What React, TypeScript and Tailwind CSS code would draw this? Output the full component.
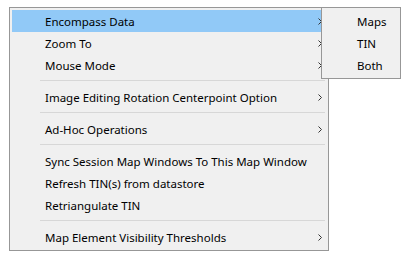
import { ReactNode } from 'react';

type Entry = { label: string; sub?: boolean; active?: boolean } | 'sep';

const entries: Entry[] = [
  { label: 'Encompass Data', sub: true, active: true },
  { label: 'Zoom To', sub: true },
  { label: 'Mouse Mode', sub: true },
  'sep',
  { label: 'Image Editing Rotation Centerpoint Option', sub: true },
  'sep',
  { label: 'Ad-Hoc Operations', sub: true },
  'sep',
  { label: 'Sync Session Map Windows To This Map Window' },
  { label: 'Refresh TIN(s) from datastore' },
  { label: 'Retriangulate TIN' },
  'sep',
  { label: 'Map Element Visibility Thresholds', sub: true },
];

const Chevron = () => (
  <svg width="4" height="7" viewBox="0 0 4 7" className="shrink-0">
    <path d="M0.5 0.5 L3.5 3.5 L0.5 6.5" fill="none" stroke="#333" strokeWidth="1" />
  </svg>
);

function Item({ children, active, sub, indent }: { children: ReactNode; active?: boolean; sub?: boolean; indent: string }) {
  return (
    <div className={`flex h-[22px] items-center pr-[4px] ${indent} ${active ? 'bg-[#91c9f7]' : ''}`}>
      <span className="flex-1 whitespace-nowrap pt-[2px]">{children}</span>
      {sub && <Chevron />}
    </div>
  );
}

export default function App() {
  return (
    <div
      className="h-[256px] w-[408px] bg-white pl-[9px] pt-[7px] text-[11.5px] text-black"
      style={{ fontFamily: '"Noto Sans", "Open Sans", sans-serif' }}
    >
      <div className="relative w-[320px]">
        <div className="border border-[#979797] bg-[#f0f0f0] p-[2px]">
          {entries.map((e, i) =>
            e === 'sep' ? (
              <div key={i} className="h-[10px] pt-[4px] pl-[28px] pr-[1px]">
                <div className="h-px bg-[#d7d7d7]" />
              </div>
            ) : (
              <Item key={i} active={e.active} sub={e.sub} indent="pl-[33px]">
                {e.label}
              </Item>
            )
          )}
        </div>
        <div className="absolute left-[312px] top-0 w-[80px] border border-[#979797] bg-[#f0f0f0] p-[2px]">
          {['Maps', 'TIN', 'Both'].map((s) => (
            <Item key={s} indent="pl-[33px]">
              {s}
            </Item>
          ))}
        </div>
      </div>
    </div>
  );
}
